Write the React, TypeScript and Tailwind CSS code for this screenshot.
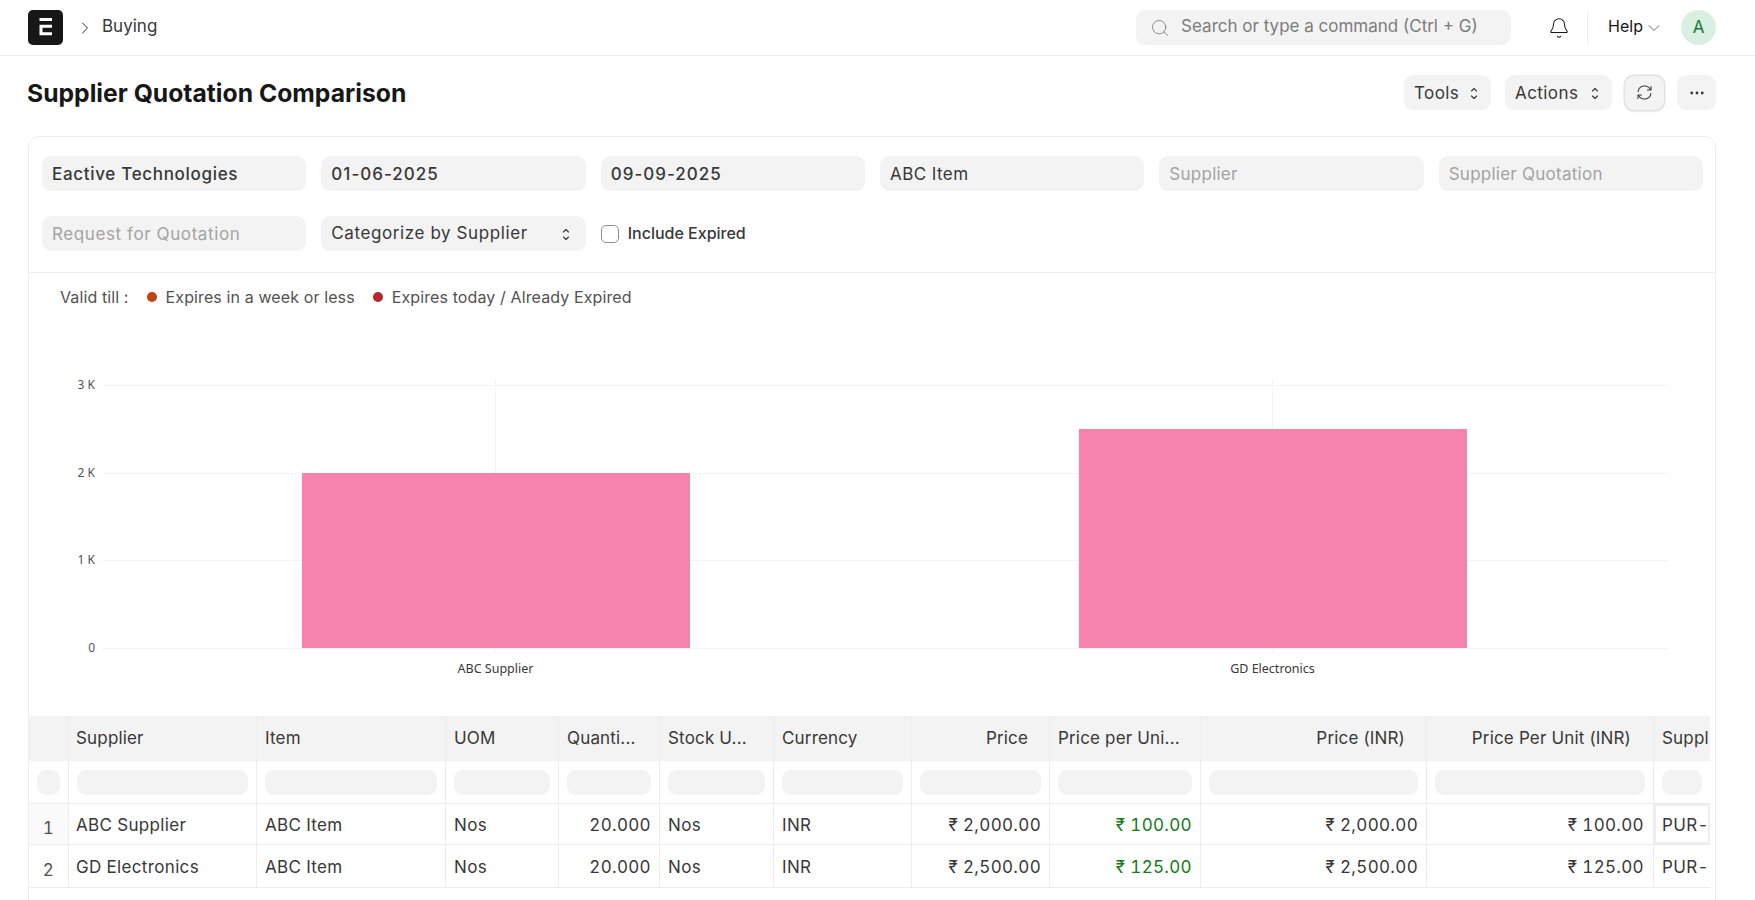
import { Bell, ChevronDown, ChevronRight, Ellipsis, Search } from "lucide-react";

const columns = [
  { label: "Supplier", width: "w-[188px]" },
  { label: "Item", width: "w-[189px]" },
  { label: "UOM", width: "w-[113px]" },
  { label: "Quanti...", width: "w-[101px]" },
  { label: "Stock U...", width: "w-[114px]" },
  { label: "Currency", width: "w-[138px]" },
  { label: "Price", width: "w-[138px]", right: "justify-end pr-[21px]" },
  { label: "Price per Uni...", width: "w-[151px]" },
  { label: "Price (INR)", width: "w-[226px]", right: "justify-end pr-[21px]" },
  { label: "Price Per Unit (INR)", width: "w-[227px]", right: "justify-end pr-[22px]" },
  { label: "Suppl", width: "w-[57px]" },
];

const rows = [
  ["ABC Supplier", "ABC Item", "Nos", "20.000", "Nos", "INR", "₹ 2,000.00", "₹ 100.00", "₹ 2,000.00", "₹ 100.00", "PUR-"],
  ["GD Electronics", "ABC Item", "Nos", "20.000", "Nos", "INR", "₹ 2,500.00", "₹ 125.00", "₹ 2,500.00", "₹ 125.00", "PUR-"],
];

function Stepper() {
  return (
    <svg viewBox="0 0 8 13" width="8" height="13" fill="none" stroke="currentColor" strokeWidth="1.1" strokeLinecap="round" strokeLinejoin="round">
      <path d="M1.5 4 4 1.5 6.5 4" />
      <path d="M1.5 9 4 11.5 6.5 9" />
    </svg>
  );
}

function Field({ text, className }: { text: string; className: string }) {
  return <div className={`flex h-[35px] items-center rounded-[9px] bg-[#f3f3f3] px-[10px] pt-[3px] text-[17px] ${className}`}>{text}</div>;
}

function PillButton({ label, width }: { label: string; width: string }) {
  return (
    <button type="button" className={`flex h-[35px] ${width} items-center justify-between rounded-[9px] bg-[#f3f3f3] pl-[10px] pr-[13px] pt-[2px] text-[17px] tracking-[0.025em] text-[#383838]`}>
      {label}
      <Stepper />
    </button>
  );
}

function Logo() {
  return (
    <svg viewBox="0 0 35 35" width="35" height="35" className="flex-none">
      <rect width="35" height="35" rx="5" fill="#171717" />
      <rect x="11.5" y="8" width="12.5" height="3" fill="#fff" />
      <path d="M11.5 14.7H24v3H14.5v4.6H24v3H11.5z" fill="#fff" />
    </svg>
  );
}

function RefreshIcon() {
  return (
    <svg viewBox="0 0 16 16" width="19" height="19" fill="none" stroke="#383838" strokeWidth="0.9" strokeLinecap="round" strokeLinejoin="round">
      <path d="M2.6 7.2A5.5 5.5 0 0 1 12.9 5.4" />
      <path d="M13.5 2.9v3h-3" />
      <path d="M13.4 8.8A5.5 5.5 0 0 1 3.1 10.6" />
      <path d="M2.5 13.1v-3h3" />
    </svg>
  );
}

function Chart() {
  const ticks = [
    { y: 386, label: "3 K" },
    { y: 474, label: "2 K" },
    { y: 561, label: "1 K" },
    { y: 649, label: "0" },
  ];
  return (
    <svg width="1686" height="394" viewBox="29 323 1686 394" className="block">
      {ticks.map((t) => (
        <g key={t.label}>
          <line x1="102" x2="1669" y1={t.y + 0.5} y2={t.y + 0.5} stroke="#f4f4f4" />
          <text x="95" y={t.y + 4} textAnchor="end" fontSize="12" fill="#525252" fontFamily="'Noto Sans', sans-serif">
            {t.label}
          </text>
        </g>
      ))}
      <line x1="495.5" x2="495.5" y1="380" y2="654" stroke="#f4f4f4" />
      <line x1="1272.5" x2="1272.5" y1="380" y2="654" stroke="#f4f4f4" />
      <rect x="302" y="474" width="388" height="175" fill="#f683ae" />
      <rect x="1079" y="430" width="388" height="219" fill="#f683ae" />
      <text x="495.5" y="674" textAnchor="middle" fontSize="12.5" fill="#383838" fontFamily="'Noto Sans', sans-serif">
        ABC Supplier
      </text>
      <text x="1272.5" y="674" textAnchor="middle" fontSize="12.5" fill="#383838" fontFamily="'Noto Sans', sans-serif">
        GD Electronics
      </text>
    </svg>
  );
}

export default function App() {
  return (
    <div className="h-[900px] overflow-hidden bg-white font-['Inter',sans-serif] text-[#383838]">
      {/* Navbar */}
      <header className="flex h-[56px] items-center border-b border-[#ededed] pl-[28px] pr-[39px]">
        <Logo />
        <ChevronRight size={20} strokeWidth={1.1} className="ml-[12px] text-[#171717]" />
        <span className="ml-[7px] pb-[2px] text-[17px] text-[#383838]">Buying</span>
        <div className="ml-auto flex h-[35px] w-[375px] items-center gap-[11px] rounded-[9px] bg-[#f3f3f3] pl-[14px] text-[17px] text-[#7c7c7c]">
          <Search size={20} strokeWidth={1} />
          <span className="pb-[2px]">Search or type a command (Ctrl + G)</span>
        </div>
        <Bell size={22} strokeWidth={1.1} className="ml-[37px] text-[#171717]" />
        <div className="ml-[17px] h-[30px] w-px bg-[#ededed]" />
        <span className="ml-[20px] pb-[3px] text-[16px] text-[#171717]">Help</span>
        <ChevronDown size={20} strokeWidth={1} className="ml-[1px] text-[#525252]" />
        <div className="ml-[17px] flex h-[35px] w-[35px] items-center justify-center rounded-full bg-[#d9f0e1] text-[17px] text-[#137a3c]">
          A
        </div>
      </header>

      {/* Page head */}
      <div className="flex h-[80px] items-center pb-[7px] pl-[27px] pr-[39px]">
        <h1 className="mt-[2px] text-[24.7px] font-bold text-[#171717]">Supplier Quotation Comparison</h1>
        <div className="ml-auto flex items-center">
          <PillButton label="Tools" width="w-[87px]" />
          <div className="ml-[14px]">
            <PillButton label="Actions" width="w-[107px]" />
          </div>
          <button type="button" className="ml-[13px] flex h-[34px] w-[39px] items-center justify-center rounded-[9px] bg-[#f3f3f3] shadow-[0_0_0_1.5px_#e2e2e2,0_1px_2px_#d4d4d4]">
            <RefreshIcon />
          </button>
          <button type="button" className="ml-[13px] flex h-[35px] w-[39px] items-center justify-center rounded-[9px] bg-[#f3f3f3]">
            <Ellipsis size={18} strokeWidth={1.75} />
          </button>
        </div>
      </div>

      {/* Report card */}
      <section className="ml-[28px] h-[800px] w-[1688px] rounded-t-[11px] border border-[#ededed]">
        <div className="grid h-[136px] grid-cols-6 content-start gap-x-[15px] gap-y-[25px] border-b border-[#ededed] pl-[13px] pr-[12px] pt-[19px]">
          <Field text="Eactive Technologies" className="font-medium tracking-[0.04em] text-[#383838]" />
          <Field text="01-06-2025" className="font-medium tracking-[0.06em] text-[#383838]" />
          <Field text="09-09-2025" className="font-medium tracking-[0.06em] text-[#383838]" />
          <Field text="ABC Item" className="tracking-[0.025em] text-[#383838]" />
          <Field text="Supplier" className="tracking-[0.015em] text-[#a3a3a3]" />
          <Field text="Supplier Quotation" className="tracking-[0.015em] text-[#a3a3a3]" />
          <Field text="Request for Quotation" className="tracking-[0.035em] text-[#a3a3a3]" />
          <div className="flex h-[35px] items-center justify-between rounded-[9px] bg-[#f3f3f3] pl-[10px] pr-[16px] pt-[1px] text-[17px] tracking-[0.035em]">
            Categorize by Supplier
            <Stepper />
          </div>
          <label className="col-span-2 flex h-[35px] items-center gap-[9px] text-[16px] font-medium text-[#383838]">
            <span className="h-[18px] w-[18px] rounded-[5px] border border-[#8f8f8f] bg-white" />
            <span className="pb-[2px]">Include Expired</span>
          </label>
        </div>

        <div className="flex h-[49px] items-center pb-[2px] pl-[31px] text-[16px] tracking-[0.007em] text-[#525252]">
          Valid till :
          <span className="ml-[18px] h-[10px] w-[10px] rounded-full bg-[#c0440f]" />
          <span className="ml-[9px]">Expires in a week or less</span>
          <span className="ml-[18px] h-[10px] w-[10px] rounded-full bg-[#b5272a]" />
          <span className="ml-[9px]">Expires today / Already Expired</span>
        </div>

        <div className="h-[394px]">
          <Chart />
        </div>

        {/* Table */}
        <div className="w-[1681px] overflow-hidden text-[17px]">
          <div className="flex h-[45px] w-max items-center bg-[#f3f3f3] tracking-[0.01em] text-[#383838]">
            <div className="h-full w-[39px]" />
            {columns.map((c, j) => (
              <div key={c.label} className={`flex h-full ${c.width} items-center whitespace-nowrap border-l border-[#ededed] ${j === 0 ? "pl-[7px]" : "pl-[8px]"} ${c.right ?? "pr-[8px]"}`}>
                {c.label}
              </div>
            ))}
          </div>
          <div className="flex h-[43px] w-max border-b border-[#ededed]">
            <div className="flex w-[39px] items-center justify-center">
              <div className="h-[25px] w-[23px] rounded-[9px] bg-[#f3f3f3]" />
            </div>
            {columns.map((c) => (
              <div key={c.label} className={`flex ${c.width} items-center border-l border-[#ededed] px-[8px]`}>
                <div className="h-[25px] w-full rounded-[9px] bg-[#f3f3f3]" />
              </div>
            ))}
          </div>
          {rows.map((row, i) => (
            <div key={row[0]} className={`flex w-max border-b border-[#ededed] tracking-[0.02em] tabular-nums ${i === 0 ? "h-[41px]" : "h-[43px]"}`}>
              <div className={`flex w-[39px] items-center justify-center pt-[9px] text-[#525252] ${i === 0 ? "bg-[#fafafa]" : ""}`}>{i + 1}</div>
              {row.map((cell, j) => (
                <div
                  key={j}
                  className={`flex ${columns[j].width} items-center whitespace-nowrap border-l border-[#ededed] ${j === 0 ? "pl-[7px]" : "pl-[8px]"} ${j === 9 ? "pr-[9px]" : "pr-[8px]"} pt-[3px] ${
                    j === 3 || (j >= 6 && j <= 9) ? "justify-end" : ""
                  } ${j === 7 ? "text-[#137a18]" : ""} ${i === 0 && j === 10 ? "shadow-[inset_0_0_0_2px_#eeeeee]" : ""}`}
                >
                  {cell}
                </div>
              ))}
            </div>
          ))}
        </div>
      </section>
    </div>
  );
}
